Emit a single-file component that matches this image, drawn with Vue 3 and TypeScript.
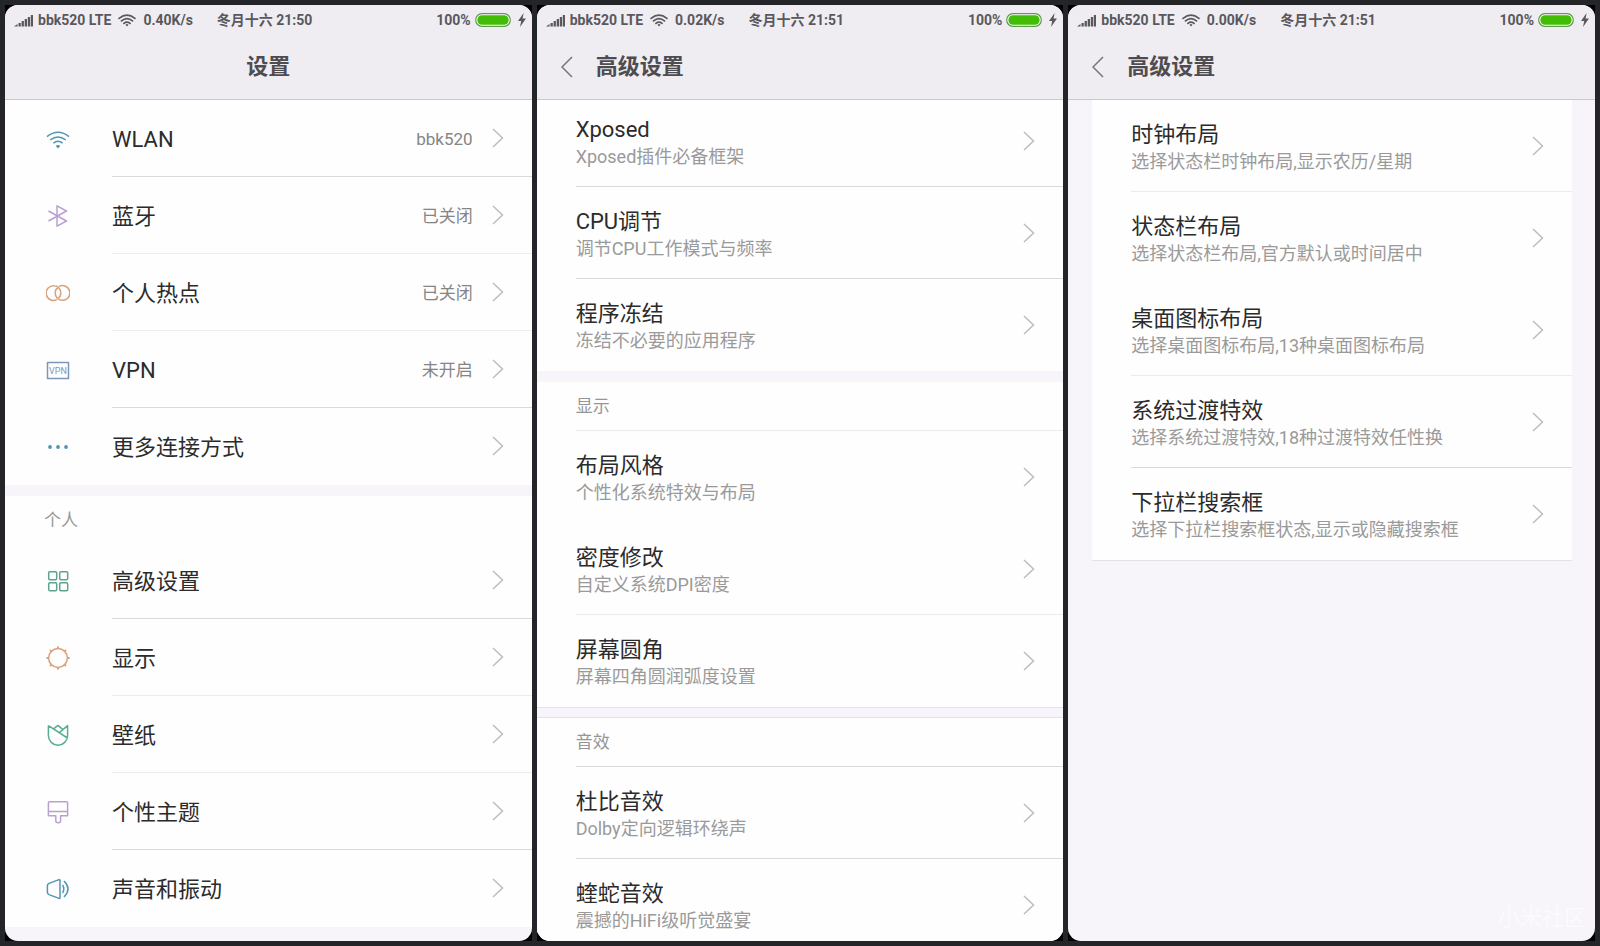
<script setup lang="ts">
type Tone = 'strong' | 'soft' | 'none'

interface Item {
  label: string
  line: Tone
  icon?: string
  value?: string
  detail?: string
}

interface Section {
  title?: string
  titleLine?: Tone
  items: Item[]
}

interface Screen {
  id: string
  title: string
  speed: string
  time: string
  back: boolean
  watermark?: string
  sections: Section[]
}

const screens: Screen[] = [
  {
    id: 'home',
    title: '设置',
    speed: '0.40K/s',
    time: '冬月十六 21:50',
    back: false,
    sections: [
      {
        items: [
          { icon: 'wlan', label: 'WLAN', value: 'bbk520', line: 'strong' },
          { icon: 'bluetooth', label: '蓝牙', value: '已关闭', line: 'soft' },
          { icon: 'hotspot', label: '个人热点', value: '已关闭', line: 'soft' },
          { icon: 'vpn', label: 'VPN', value: '未开启', line: 'strong' },
          { icon: 'more', label: '更多连接方式', line: 'none' },
        ],
      },
      {
        title: '个人',
        titleLine: 'none',
        items: [
          { icon: 'advanced', label: '高级设置', line: 'strong' },
          { icon: 'display', label: '显示', line: 'soft' },
          { icon: 'wallpaper', label: '壁纸', line: 'soft' },
          { icon: 'theme', label: '个性主题', line: 'strong' },
          { icon: 'sound', label: '声音和振动', line: 'none' },
        ],
      },
    ],
  },
  {
    id: 'scrolled',
    title: '高级设置',
    speed: '0.02K/s',
    time: '冬月十六 21:51',
    back: true,
    sections: [
      {
        items: [
          { label: 'Xposed', detail: 'Xposed插件必备框架', line: 'strong' },
          { label: 'CPU调节', detail: '调节CPU工作模式与频率', line: 'strong' },
          { label: '程序冻结', detail: '冻结不必要的应用程序', line: 'none' },
        ],
      },
      {
        title: '显示',
        titleLine: 'soft',
        items: [
          { label: '布局风格', detail: '个性化系统特效与布局', line: 'none' },
          { label: '密度修改', detail: '自定义系统DPI密度', line: 'soft' },
          { label: '屏幕圆角', detail: '屏幕四角圆润弧度设置', line: 'none' },
        ],
      },
      {
        title: '音效',
        titleLine: 'strong',
        items: [
          { label: '杜比音效', detail: 'Dolby定向逻辑环绕声', line: 'strong' },
          { label: '蝰蛇音效', detail: '震撼的HiFi级听觉盛宴', line: 'none' },
        ],
      },
    ],
  },
  {
    id: 'card',
    title: '高级设置',
    speed: '0.00K/s',
    time: '冬月十六 21:51',
    back: true,
    watermark: '小米社区',
    sections: [
      {
        items: [
          { label: '时钟布局', detail: '选择状态栏时钟布局,显示农历/星期', line: 'soft' },
          { label: '状态栏布局', detail: '选择状态栏布局,官方默认或时间居中', line: 'none' },
          { label: '桌面图标布局', detail: '选择桌面图标布局,13种桌面图标布局', line: 'soft' },
          { label: '系统过渡特效', detail: '选择系统过渡特效,18种过渡特效任性换', line: 'strong' },
          { label: '下拉栏搜索框', detail: '选择下拉栏搜索框状态,显示或隐藏搜索框', line: 'none' },
        ],
      },
    ],
  },
]
</script>

<template>
  <main class="wall">
    <div v-for="screen in screens" :key="screen.id" class="device">
      <section class="screen" :class="screen.id">
        <header class="top">
          <div class="status">
            <svg class="signal" viewBox="0 0 19 13" aria-hidden="true">
              <path d="M0 12.5L3.5 10v2.5zM4.5 9h2.3v3.5H4.5zM7.6 7h2.3v5.5H7.6zM10.7 5H13v7.5h-2.3zM13.8 3h2.3v9.5h-2.3zM16.8 1H19v11.5h-2.2z" />
            </svg>
            <span class="carrier">bbk520 LTE</span>
            <svg class="wifi" viewBox="0 0 20 14" aria-hidden="true">
              <g fill="none" stroke="currentColor" stroke-width="1.9" stroke-linecap="round">
                <path d="M1.2 4.6Q10-2.6 18.8 4.6M3.9 7.5Q10 2.4 16.1 7.5M6.6 10.2Q10 7.4 13.4 10.2" />
              </g>
              <path d="M8.3 11.6q1.7-1.2 3.4 0L10 13.6z" />
            </svg>
            <span class="speed">{{ screen.speed }}</span>
            <span>{{ screen.time }}</span>
            <span class="charge">100%</span>
            <svg class="battery" viewBox="0 0 36 14" aria-hidden="true">
              <rect x=".7" y=".7" width="34.6" height="12.6" rx="6.3" fill="#fff" stroke="#5b9a48" stroke-width="1.2" />
              <rect x="2.4" y="2.2" width="31.2" height="9.6" rx="4.6" fill="#41bd05" />
            </svg>
            <svg class="bolt" viewBox="0 0 8 14" aria-hidden="true">
              <path d="M5.6 0L0 8h3.2L2 14l6-8.4H4.6z" />
            </svg>
          </div>
          <div class="bar">
            <button v-if="screen.back" class="back" type="button" aria-label="返回">
              <svg viewBox="0 0 12 22" aria-hidden="true"><path d="M11 1L1 11l10 10" /></svg>
            </button>
            <h1>{{ screen.title }}</h1>
          </div>
        </header>

        <div class="scroll">
          <section v-for="(section, s) in screen.sections" :key="s" class="group">
            <h2 v-if="section.title" :class="section.titleLine">
              <span>{{ section.title }}</span>
            </h2>
            <ul>
              <li v-for="item in section.items" :key="item.label">
                <button class="row" type="button">
                  <svg v-if="item.icon" class="icon" :class="item.icon" viewBox="0 0 24 24" aria-hidden="true">
                    <template v-if="item.icon === 'wlan'">
                      <path d="M1 9.6Q12 .8 23 9.6M4.2 13Q12 6.8 19.8 13M7.4 16.2Q12 12.4 16.6 16.2" />
                      <path class="fill" d="M9.6 18.8q2.4-1.4 4.8 0L12 21.4z" />
                    </template>
                    <template v-else-if="item.icon === 'bluetooth'">
                      <path d="M2.5 7l18 10L11 22.2V1.8L20.5 7l-18 10" />
                    </template>
                    <template v-else-if="item.icon === 'hotspot'">
                      <path d="M11 18.6A7.4 7.4 0 1 1 8.4 4.7c3.6 0 6.4 3.4 6.4 7.3 0 2.3-.9 4.3-2.7 5" />
                      <path d="M13 5.4A7.4 7.4 0 1 1 15.6 19.3c-3.6 0-6.4-3.4-6.4-7.3 0-2.3.9-4.3 2.7-5" />
                    </template>
                    <template v-else-if="item.icon === 'vpn'">
                      <rect x="1.5" y="4.5" width="21" height="16" />
                      <text x="12" y="16">VPN</text>
                    </template>
                    <template v-else-if="item.icon === 'more'">
                      <circle class="fill" cx="4" cy="12" r="1.9" />
                      <circle class="fill" cx="12" cy="12" r="1.9" />
                      <circle class="fill" cx="20" cy="12" r="1.9" />
                    </template>
                    <template v-else-if="item.icon === 'advanced'">
                      <rect x="2.7" y="2.7" width="8" height="8" rx="1.2" />
                      <rect x="13.7" y="2.7" width="8" height="8" rx="1.2" />
                      <rect x="2.7" y="13.7" width="8" height="8" rx="1.2" />
                      <rect x="13.7" y="13.7" width="8" height="8" rx="1.2" />
                    </template>
                    <template v-else-if="item.icon === 'display'">
                      <circle cx="12" cy="12" r="9.4" />
                      <path stroke-width="2" d="M12 .4v2M12 21.6v2M.4 12h2M21.6 12h2M4 4l1.4 1.4M18.6 18.6L20 20M4 20l1.4-1.4M18.6 5.4L20 4" />
                    </template>
                    <template v-else-if="item.icon === 'wallpaper'">
                      <path d="M2.4 2.6L21.4 15M2.4 2.6V12.6a9.6 9.6 0 0 0 19.2 0V2.6L13.4 9.6M7.6 5.8L12 2.4l4.6 4" />
                    </template>
                    <template v-else-if="item.icon === 'theme'">
                      <path d="M3.4 1.8h17.2q1 0 1 1v13H14.6v5q0 2-2.4 2t-2.4-2v-5H2.4v-13q0-1 1-1zM2.4 11.4h19.2" />
                    </template>
                    <template v-else>
                      <path d="M14 3.6v17q0 1-1 .8L3 17.6q-1.6-.8-1.6-2V8.4q0-1.2 1.6-2L13 2.6q1-.2 1 1zM16.6 8q2.4 4 0 8M18 4q8 8 0 16" />
                    </template>
                  </svg>
                  <span class="body" :class="item.line">
                    <span class="text">
                      <span class="label">{{ item.label }}</span>
                      <span v-if="item.detail" class="detail">{{ item.detail }}</span>
                    </span>
                    <span v-if="item.value" class="value">{{ item.value }}</span>
                    <svg class="chevron" viewBox="0 0 12 20" aria-hidden="true"><path d="M1 1l9.5 9L1 19" /></svg>
                  </span>
                </button>
              </li>
            </ul>
          </section>
        </div>
        <span v-if="screen.watermark" class="watermark">{{ screen.watermark }}</span>
      </section>
    </div>
  </main>
</template>

<style>
body {
  margin: 0;
  background: #242529;
}
</style>

<style scoped>
.wall {
  box-sizing: border-box;
  display: grid;
  grid-template-columns: repeat(3, minmax(0, 1fr));
  gap: 5px;
  height: 100vh;
  padding: 5px;
  background: #242529;
  color: #2b2b2b;
  font-family: Roboto, 'Noto Sans CJK SC', sans-serif;
}

.device {
  min-height: 0;
  background: linear-gradient(#000 20px, #242529 20px calc(100% - 20px), #000 calc(100% - 20px));
}

.screen {
  position: relative;
  display: flex;
  flex-direction: column;
  height: 100%;
  overflow: hidden;
  border-radius: 13px;
  background: #f7f5f9;
}

button {
  margin: 0;
  padding: 0;
  border: 0;
  background: none;
  color: inherit;
  font: inherit;
  text-align: left;
  cursor: pointer;
}

svg {
  display: block;
  flex: none;
}

.top {
  position: relative;
  flex: none;
  border-bottom: 1px solid #cbc9cc;
  background: #efedf2;
  color: #5a585d;
}

.status {
  display: flex;
  align-items: center;
  height: 30px;
  padding: 0 6px 0 9px;
  font-size: 14px;
  font-weight: 700;
  line-height: 30px;
  white-space: nowrap;
}

.status svg {
  fill: currentColor;
}

.signal {
  width: 19px;
  height: 13px;
}

.carrier {
  margin-left: 5px;
}

.wifi {
  width: 18px;
  height: 13px;
  margin: 0 7px;
}

.speed {
  margin-right: 24px;
}

.charge {
  margin-left: auto;
}

.battery {
  width: 36px;
  height: 14px;
  margin: 0 7px 0 4px;
}

.bolt {
  width: 8px;
  height: 14px;
}

.bar {
  display: flex;
  align-items: center;
  height: 64px;
  padding: 0 24px;
  gap: 23px;
}

.home .bar {
  justify-content: center;
}

.back svg {
  width: 12px;
  height: 22px;
  fill: none;
  stroke: #77757a;
  stroke-width: 1.5;
}

h1 {
  margin: 0;
  color: #4e4c50;
  font-size: 22px;
  font-weight: 700;
  line-height: 32px;
}

.scroll {
  flex: 1;
  display: flex;
  flex-direction: column;
  gap: 11px;
  min-height: 0;
  overflow-y: auto;
  scrollbar-width: none;
}

.group {
  flex: none;
  background: #fefefe;
}

.home .scroll {
  padding-bottom: 16px;
}

.scrolled .group:first-child {
  margin-top: -5px;
}

.scrolled .group:last-child {
  box-shadow: 0 -1px #e6e0e8, 0 -10px #f8f4fb, 0 -11px #e6e0e8;
}

.card .scroll {
  padding: 0 23px 0 24px;
}

.card .group {
  border-bottom: 1px solid #e2e1e4;
}

h2 {
  box-sizing: border-box;
  height: 49px;
  margin: 0 0 0 39px;
  color: #969696;
  font-size: 17px;
  font-weight: 400;
  line-height: 48px;
}

.home h2 {
  height: 46px;
}

ul {
  margin: 0;
  padding: 0;
  list-style: none;
}

.row {
  display: flex;
  align-items: center;
  width: 100%;
  height: 92px;
  padding-left: 39px;
}

.home .row {
  height: 77px;
  padding-left: 41px;
  gap: 42px;
}

.body {
  box-sizing: border-box;
  flex: 1;
  display: flex;
  align-items: center;
  min-width: 0;
  height: 100%;
  padding-right: 28px;
}

.body,
h2 {
  border-bottom: 1px solid transparent;
}

.strong {
  border-bottom-color: #dadada;
}

.soft {
  border-bottom-color: #ebebeb;
}

.text {
  flex: 1;
  display: flex;
  flex-direction: column;
  min-width: 0;
  padding-top: 4px;
  white-space: nowrap;
}

.home .text {
  padding-top: 2px;
}

.label {
  font-size: 22px;
  line-height: 27px;
}

.detail {
  color: #9a9a9a;
  font-size: 18px;
  line-height: 27px;
}

.value {
  margin-right: 19px;
  padding-top: 2px;
  color: #858585;
  font-size: 17px;
  line-height: 27px;
}

.chevron {
  width: 12px;
  height: 20px;
  fill: none;
  stroke: #bdbdbd;
  stroke-width: 1.5;
}

.icon {
  width: 24px;
  height: 24px;
  fill: none;
  stroke: currentColor;
  stroke-width: 1.5;
  stroke-linejoin: round;
}

.icon .fill {
  fill: currentColor;
  stroke: none;
}

.icon text {
  fill: currentColor;
  stroke: none;
  font-size: 9px;
  text-anchor: middle;
}

.wlan,
.more,
.sound {
  color: #5296b4;
}

.bluetooth,
.theme {
  color: #b9a0d2;
}

.hotspot,
.display {
  color: #d9a27c;
}

.vpn {
  color: #7e97b8;
}

.advanced {
  color: #5ea38f;
}

.wallpaper {
  color: #58ae8e;
}

.watermark {
  position: absolute;
  right: 9px;
  bottom: 7px;
  color: #fbfafd;
  font-size: 22px;
  line-height: 32px;
}
</style>
